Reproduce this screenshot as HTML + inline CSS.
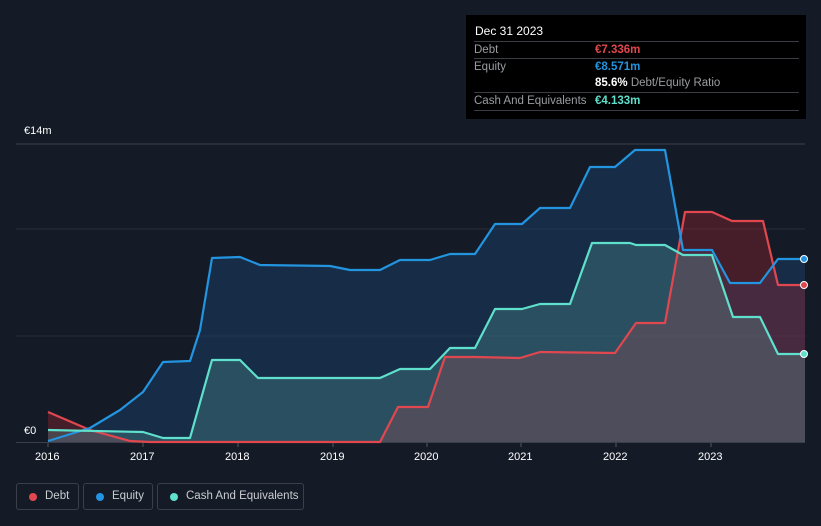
<!DOCTYPE html><html><head><style>
html,body{margin:0;background:#151b26;width:821px;height:526px;overflow:hidden;font-family:"Liberation Sans",sans-serif;position:relative}
.tt{position:absolute;left:466px;top:15px;width:340px;height:104px;background:#000;color:#fff;font-size:11.5px}
.row{position:absolute;left:8px;width:325px;border-top:1px solid #3a3d42;height:17px;line-height:17px;color:#9a9ca0;white-space:nowrap}
.row b{position:absolute;left:121px;font-weight:bold}
.lg{position:absolute;top:483px;height:27px;border:1px solid #3a3f49;border-radius:3px;color:#c9ccd1;font-size:11.5px;line-height:25px;box-sizing:border-box;white-space:nowrap}
.lg i{position:absolute;left:12px;top:9px;width:8px;height:8px;border-radius:50%}
.ax{position:absolute;color:#fff;font-size:11px}
</style></head><body>
<svg width="821" height="526" style="position:absolute;left:0;top:0">
<line x1="16" y1="144" x2="805" y2="144" stroke="#3a404b"/>
<line x1="16" y1="229" x2="805" y2="229" stroke="#262d39"/>
<line x1="16" y1="336" x2="805" y2="336" stroke="#262d39"/>
<line x1="16" y1="442.5" x2="805" y2="442.5" stroke="#3a404b"/>
<polygon fill="#1a4570" fill-opacity="0.45" points="48,442 48,441 90,428 120,410 143,392 163,362 190,361 200,330 212,258 240,257 260,265 330,266 350,270 380,270 400,260 430,260 450,254 475,254 495,224 522,224 540,208 570,208 590,167 615,167 635,150 665,150 683,250 712,250 730,283 760,283 778,259 805,259 805,442"/>
<polygon fill="#a02535" fill-opacity="0.35" points="48,442 48,412 90,430 130,441 150,442 380,442 398,407 428,407 445,357 475,357 520,358 540,352 615,353 636,323 665,323 685,212 712,212 732,221 763,221 778,285 805,285 805,442"/>
<polygon fill="#5fb8ac" fill-opacity="0.25" points="48,442 48,430 143,432 163,438 190,438 212,360 240,360 258,378 380,378 400,369 430,369 450,348 475,348 495,309 522,309 540,304 570,304 592,243 630,243 636,245 665,245 683,255 712,255 733,317 760,317 778,354 805,354 805,442"/>
<g fill="none" stroke-width="2.2" stroke-linejoin="round">
<polyline stroke="#e0474f" points="48,412 90,430 130,441 150,442 380,442 398,407 428,407 445,357 475,357 520,358 540,352 615,353 636,323 665,323 685,212 712,212 732,221 763,221 778,285 805,285"/>
<polyline stroke="#2394df" points="48,441 90,428 120,410 143,392 163,362 190,361 200,330 212,258 240,257 260,265 330,266 350,270 380,270 400,260 430,260 450,254 475,254 495,224 522,224 540,208 570,208 590,167 615,167 635,150 665,150 683,250 712,250 730,283 760,283 778,259 805,259"/>
<polyline stroke="#5fe0cc" points="48,430 143,432 163,438 190,438 212,360 240,360 258,378 380,378 400,369 430,369 450,348 475,348 495,309 522,309 540,304 570,304 592,243 630,243 636,245 665,245 683,255 712,255 733,317 760,317 778,354 805,354"/>
</g>
<circle cx="804" cy="259" r="3.5" fill="#2394df" stroke="#fff"/>
<circle cx="804" cy="285" r="3.5" fill="#e0474f" stroke="#fff"/>
<circle cx="804" cy="354" r="3.5" fill="#5fe0cc" stroke="#fff"/>
<g stroke="#555" ><line x1="48" y1="443" x2="48" y2="447"/><line x1="143" y1="443" x2="143" y2="447"/><line x1="238" y1="443" x2="238" y2="447"/><line x1="333" y1="443" x2="333" y2="447"/><line x1="427" y1="443" x2="427" y2="447"/><line x1="521" y1="443" x2="521" y2="447"/><line x1="616" y1="443" x2="616" y2="447"/><line x1="711" y1="443" x2="711" y2="447"/></g>
</svg>
<div class="ax" style="left:24px;top:125px">€14m</div>
<div class="ax" style="left:24px;top:425px">€0</div>
<div class="ax" style="left:35px;top:451px">2016</div><div class="ax" style="left:130px;top:451px">2017</div><div class="ax" style="left:225px;top:451px">2018</div><div class="ax" style="left:320px;top:451px">2019</div><div class="ax" style="left:414px;top:451px">2020</div><div class="ax" style="left:508px;top:451px">2021</div><div class="ax" style="left:603px;top:451px">2022</div><div class="ax" style="left:698px;top:451px">2023</div>
<div class="tt">
<div style="position:absolute;left:9px;top:9px;font-size:12px">Dec 31 2023</div>
<div class="row" style="top:26px">Debt<b style="color:#e0474f">€7.336m</b></div>
<div class="row" style="top:43px">Equity<b style="color:#2394df">€8.571m</b></div>
<div class="row" style="top:60px;border-top:none"><b style="color:#fff">85.6% <span style="color:#9a9ca0;font-weight:normal">Debt/Equity Ratio</span></b></div>
<div class="row" style="top:77px">Cash And Equivalents<b style="color:#5fe0cc">€4.133m</b></div>
<div class="row" style="top:95px;height:0"></div>
</div>
<div class="lg" style="left:16px;width:63px"><i style="background:#e0474f"></i><span style="position:absolute;left:28px">Debt</span></div>
<div class="lg" style="left:83px;width:70px"><i style="background:#2394df"></i><span style="position:absolute;left:28px">Equity</span></div>
<div class="lg" style="left:157px;width:147px"><i style="background:#5fe0cc"></i><span style="position:absolute;left:28px">Cash And Equivalents</span></div>
</body></html>
